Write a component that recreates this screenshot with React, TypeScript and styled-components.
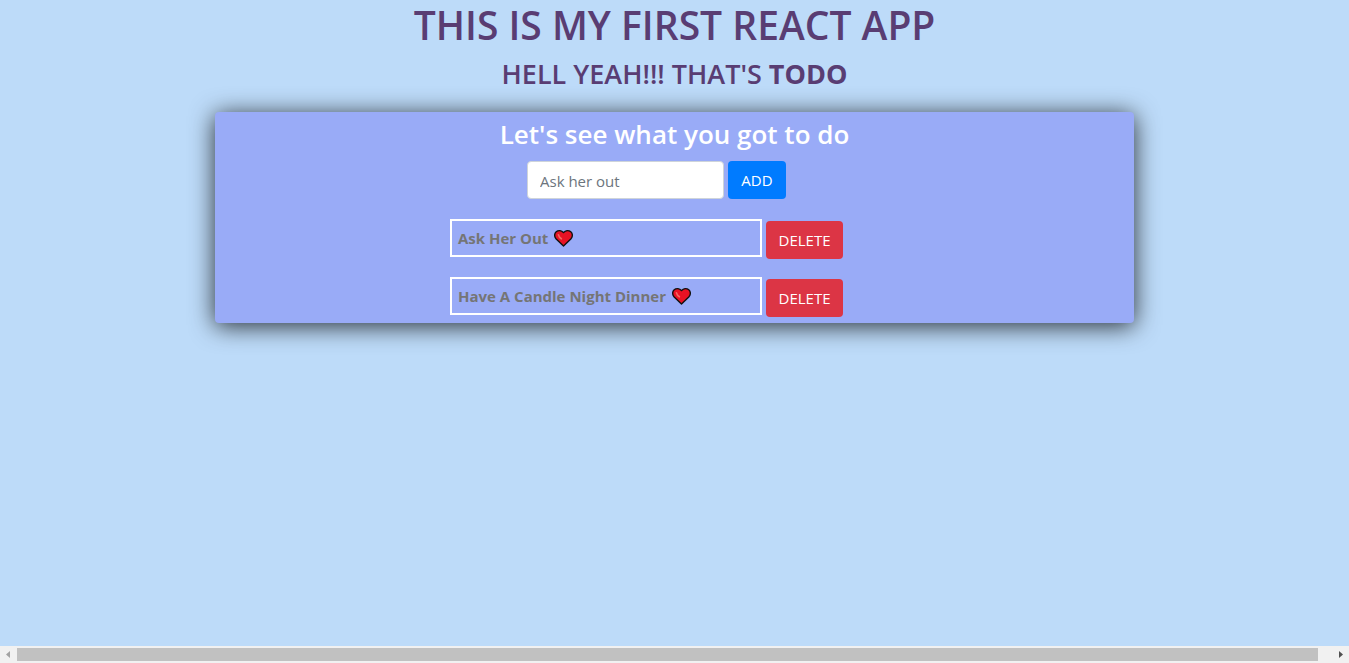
import React, { useState } from "react";
import styled, { createGlobalStyle } from "styled-components";

const GlobalStyle = createGlobalStyle`
  *, *::before, *::after { box-sizing: border-box; }
  body {
    margin: 0;
    background: #bddbf9;
    font-family: "Open Sans", "Noto Sans", sans-serif;
    font-size: 15px;
    line-height: 24px;
  }
`;

const Page = styled.div`
  min-height: 100vh;
  display: flex;
  flex-direction: column;
`;

const Main = styled.main`
  flex: 1;
  display: flex;
  flex-direction: column;
  align-items: center;
  padding: 0 18px;
  color: #593d73;
  text-align: center;
`;

const Title = styled.h1`
  margin: 0 0 8px;
  font-size: 39px;
  font-weight: 600;
  line-height: 50px;
`;

const Subtitle = styled.h2`
  margin: 0 0 22px;
  font-size: 27px;
  font-weight: 600;
  line-height: 32px;

  b { font-weight: 700; }
`;

const Card = styled.section`
  width: 70%;
  padding: 4px 0 6px;
  border-radius: 4px;
  background: #99abf7;
  box-shadow: 0 3px 24px rgba(0, 0, 0, 0.8);
`;

const CardTitle = styled.h3`
  margin: 0 0 8px;
  color: #fff;
  font-size: 26px;
  font-weight: 600;
  line-height: 37px;
`;

const Form = styled.form`
  display: flex;
  justify-content: center;
  gap: 4px;
  margin-bottom: 20px;
  padding-right: 36px;
`;

const TextBox = styled.input`
  width: 197px;
  height: 38px;
  padding: 8px 12px 6px;
  border: 1px solid #ced4da;
  border-radius: 4px;
  background: #fff;
  color: #495057;
  font: inherit;
  &::placeholder { color: #6c757d; opacity: 1; }
`;

const Button = styled.button<{ $danger?: boolean }>`
  height: 38px;
  width: ${(p) => (p.$danger ? 77 : 58)}px;
  padding: 0;
  border: 0;
  border-radius: 4px;
  background: ${(p) => (p.$danger ? "#dc3545" : "#007bff")};
  color: #fff;
  font: inherit;
  cursor: pointer;
`;

const List = styled.ul`
  display: flex;
  flex-direction: column;
  gap: 18px;
  margin: 0;
  padding: 0 56px 0 0;
  list-style: none;
`;

const Row = styled.li`
  display: flex;
  justify-content: center;
  align-items: flex-end;
  gap: 4px;
`;

const Task = styled.span`
  display: flex;
  align-items: center;
  gap: 6px;
  width: 312px;
  height: 38px;
  margin-bottom: 2px;
  padding: 0 6px;
  border: 2px solid #fff;
  color: #757575;
  font-weight: 700;
`;

const ScrollTrack = styled.div`
  display: flex;
  align-items: center;
  height: 17px;
  background: #f1f1f1;
`;

const ScrollArrow = styled.svg`
  flex: none;
  width: 17px;
  height: 17px;
`;

const ScrollThumb = styled.div`
  flex: 1;
  height: 13px;
  margin-right: 14px;
  background: #c1c1c1;
`;

const Heart = () => (
  <svg width="19" height="18" viewBox="0 0 19 18" aria-label="heart" role="img">
    <path
      d="M9.5 17 L2.2 10 C0 7.6 0.3 4.4 2.2 2.8 C4.4 1 7.6 1.4 9.5 3.6 C11.4 1.4 14.6 1 16.8 2.8 C18.7 4.4 19 7.6 16.8 10 Z"
      fill="#e81224"
      stroke="#111"
      strokeWidth="1.4"
      strokeLinejoin="round"
    />
    <path d="M4.4 5.8 C4.8 7.4 5.8 8.8 7.4 9.8" fill="none" stroke="#f4675f" strokeWidth="1.6" strokeLinecap="round" />
  </svg>
);

export default function App() {
  const [tasks, setTasks] = useState(["Ask Her Out", "Have A Candle Night Dinner"]);
  const [text, setText] = useState("");

  const add = (e: React.FormEvent) => {
    e.preventDefault();
    if (text.trim()) {
      setTasks([...tasks, text.trim()]);
      setText("");
    }
  };

  return (
    <Page>
      <GlobalStyle />
      <Main>
        <Title>THIS IS MY FIRST REACT APP</Title>
        <Subtitle>
          HELL YEAH!!! THAT'S <b>TODO</b>
        </Subtitle>
        <Card>
          <CardTitle>Let's see what you got to do</CardTitle>
          <Form onSubmit={add}>
            <TextBox
              aria-label="New task"
              placeholder="Ask her out"
              value={text}
              onChange={(e) => setText(e.target.value)}
            />
            <Button type="submit">ADD</Button>
          </Form>
          <List>
            {tasks.map((task, i) => (
              <Row key={i}>
                <Task>
                  {task}
                  <Heart />
                </Task>
                <Button $danger type="button" onClick={() => setTasks(tasks.filter((_, j) => j !== i))}>
                  DELETE
                </Button>
              </Row>
            ))}
          </List>
        </Card>
      </Main>
      <ScrollTrack aria-hidden="true">
        <ScrollArrow viewBox="0 0 17 17">
          <path d="M10 5 V12 L6 8.5 Z" fill="#a3a3a3" />
        </ScrollArrow>
        <ScrollThumb />
        <ScrollArrow viewBox="0 0 17 17">
          <path d="M7 5 V12 L11 8.5 Z" fill="#505050" />
        </ScrollArrow>
      </ScrollTrack>
    </Page>
  );
}
